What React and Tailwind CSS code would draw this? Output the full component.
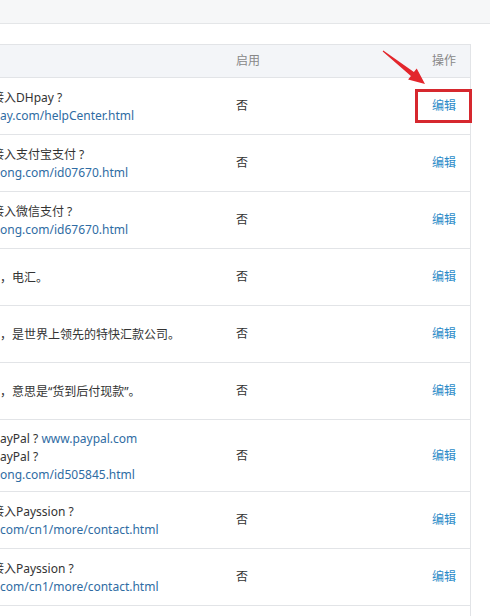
import React from 'react'

const Link = ({ children }) => <span className="text-[#2f6ca3]">{children}</span>

const rows = [
  {
    h: 'h-[57px]',
    lines: [
      <div className="-ml-[8px]">接入DHpay ?</div>,
      <Link>ay.com/helpCenter.html</Link>,
    ],
  },
  {
    h: 'h-[57px]',
    lines: [
      <div className="-ml-[8px]">接入支付宝支付 ?</div>,
      <Link>ong.com/id07670.html</Link>,
    ],
  },
  {
    h: 'h-[57px]',
    lines: [
      <div className="-ml-[8px]">接入微信支付 ?</div>,
      <Link>ong.com/id67670.html</Link>,
    ],
  },
  { h: 'h-[57px]', lines: [<div>，电汇。</div>] },
  { h: 'h-[57px]', lines: [<div>，是世界上领先的特快汇款公司。</div>] },
  { h: 'h-[57px]', lines: [<div>，意思是“货到后付现款”。</div>] },
  {
    h: 'h-[72px]',
    lines: [
      <div>
        ayPal ? <Link>www.paypal.com</Link>
      </div>,
      <div>ayPal ?</div>,
      <Link>ong.com/id505845.html</Link>,
    ],
  },
  {
    h: 'h-[57px]',
    lines: [
      <div className="-ml-[8px]">接入Payssion ?</div>,
      <Link>com/cn1/more/contact.html</Link>,
    ],
  },
  {
    h: 'h-[57px]',
    lines: [
      <div className="-ml-[8px]">接入Payssion ?</div>,
      <Link>com/cn1/more/contact.html</Link>,
    ],
  },
  { h: 'h-[57px]', lines: [] },
]

const App = () => {
  return (
    <div className="relative w-[490px] h-[616px] overflow-hidden bg-white text-[12px] text-[#333] font-['Noto_Sans','Noto_Sans_CJK_SC',sans-serif]">
      {/* top bar */}
      <div className="h-[24px] bg-[#f6f7f8] border-b border-[#e4e6e8]" />

      <div className="mt-[20px] w-[471px] border-r border-[#e2e4e7]">
        {/* header */}
        <div className="flex h-[34px] items-center border-y border-[#e2e4e7] bg-[#f3f5f8] text-[#888]">
          <div className="w-[236px]" />
          <div className="w-[150px]">启用</div>
          <div className="flex-1 pr-[14px] text-right">操作</div>
        </div>

        {rows.map((row, i) => (
          <div key={i} className={`flex items-center border-b border-[#e2e4e7] ${row.h}`}>
            <div className="w-[236px] overflow-hidden whitespace-nowrap leading-[18px] pt-[2px]">
              {row.lines.map((l, j) => (
                <div key={j}>{l}</div>
              ))}
            </div>
            {row.lines.length > 0 && (
              <>
                <div className="w-[150px]">否</div>
                <div className="flex-1 pr-[14px] text-right text-[#2b8bc8]">编辑</div>
              </>
            )}
          </div>
        ))}
      </div>

      {/* annotation */}
      <div className="absolute left-[415px] top-[89px] w-[57px] h-[34px] border-[3px] border-[#d6282e]" />
      <svg className="absolute left-0 top-0" width="490" height="120" viewBox="0 0 490 120">
        <polygon
          points="383.3,50.6 413.9,72.1 416.7,68.6 425,84 408.1,79.6 410.9,76.1 382.7,51.4"
          fill="#e3262c"
        />
      </svg>
    </div>
  )
}

export default App
